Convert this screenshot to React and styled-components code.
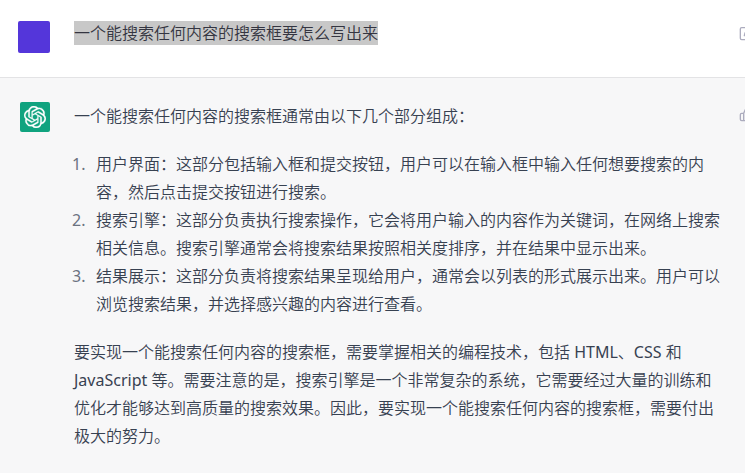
import React from "react";
import styled, { createGlobalStyle } from "styled-components";
import { FiEdit, FiThumbsUp } from "react-icons/fi";
import { SiOpenai } from "react-icons/si";

const GlobalStyle = createGlobalStyle`
	* {
		box-sizing: border-box;
	}
	body {
		margin: 0;
		min-height: 100vh;
		overflow-x: hidden;
		background: #f7f7f8;
		color: #374151;
		font-family: "Noto Sans", "Noto Sans CJK SC DemiLight", "Noto Sans CJK SC", sans-serif;
		font-size: 16px;
		font-weight: 400;
		line-height: 28px;
		text-spacing-trim: space-all;
	}
`;

const Message = styled.article`
	display: flex;
	align-items: flex-start;
	gap: 24px;
	padding: ${(props) => (props.$user ? "21px 0 24px 18px" : "24px 0 24px 18px")};
	background: ${(props) => (props.$user ? "#ffffff" : "#f7f7f8")};
	border-bottom: ${(props) => (props.$user ? "1px solid #e3e3e5" : "none")};
	overflow: hidden;
`;

const AvatarSlot = styled.div`
	display: flex;
	justify-content: flex-end;
	flex: 0 0 32px;
`;

const Avatar = styled.div`
	display: flex;
	align-items: center;
	justify-content: center;
	width: ${(props) => props.$size}px;
	height: ${(props) => props.$size}px;
	border-radius: 2px;
	background: ${(props) => props.$color};
	color: #ffffff;
`;

const Content = styled.div`
	flex: 1;
	min-width: 0;
	font-weight: ${(props) => props.$weight};
`;

const Paragraph = styled.p`
	margin: 0 0 20px;
	&:last-child {
		margin-bottom: 0;
	}
`;

const Selected = styled.mark`
	display: inline-block;
	background: #c8c8c8;
	color: #343541;
	line-height: 24px;
	vertical-align: top;
`;

const List = styled.ol`
	margin: 0 0 20px -2px;
	padding: 0;
	list-style: none;
	counter-reset: item;
`;

const Item = styled.li`
	display: flex;
	counter-increment: item;
	font-weight: 350;
	&::before {
		content: counter(item) ".";
		flex: 0 0 24px;
		color: #6b7280;
		font-weight: 400;
	}
`;

// the buttons run past the right edge of the message
const Actions = styled.div`
	flex: none;
	margin-right: -10px;
	margin-left: -8px;
	padding-top: 4px;
`;

const IconButton = styled.button`
	display: block;
	padding: 0;
	border: 0;
	background: none;
	color: #acacbe;
	svg {
		display: block;
	}
`;

const parts = [
	"用户界面：这部分包括输入框和提交按钮，用户可以在输入框中输入任何想要搜索的内容，然后点击提交按钮进行搜索。",
	"搜索引擎：这部分负责执行搜索操作，它会将用户输入的内容作为关键词，在网络上搜索相关信息。搜索引擎通常会将搜索结果按照相关度排序，并在结果中显示出来。",
	"结果展示：这部分负责将搜索结果呈现给用户，通常会以列表的形式展示出来。用户可以浏览搜索结果，并选择感兴趣的内容进行查看。",
];

const App = () => {
	return (
		<main lang="zh-CN">
			<GlobalStyle />
			<Message $user>
				<AvatarSlot>
					<Avatar $size={32} $color="#5436da" />
				</AvatarSlot>
				<Content $weight={350}>
					<Paragraph>
						<Selected>一个能搜索任何内容的搜索框要怎么写出来</Selected>
					</Paragraph>
				</Content>
				<Actions>
					<IconButton type="button" aria-label="编辑">
						<FiEdit size={16} />
					</IconButton>
				</Actions>
			</Message>
			<Message>
				<AvatarSlot>
					<Avatar $size={30} $color="#10a37f">
						<SiOpenai size={22} stroke="currentColor" strokeWidth={0.3} />
					</Avatar>
				</AvatarSlot>
				<Content $weight={400}>
					<Paragraph>一个能搜索任何内容的搜索框通常由以下几个部分组成：</Paragraph>
					<List>
						{parts.map((part) => (
							<Item key={part}>
								<span>{part}</span>
							</Item>
						))}
					</List>
					<Paragraph>
						要实现一个能搜索任何内容的搜索框，需要掌握相关的编程技术，包括 HTML、CSS 和
						JavaScript 等。需要注意的是，搜索引擎是一个非常复杂的系统，它需要经过大量的训练和优化才能够达到高质量的搜索效果。因此，要实现一个能搜索任何内容的搜索框，需要付出极大的努力。
					</Paragraph>
				</Content>
				<Actions>
					<IconButton type="button" aria-label="赞">
						<FiThumbsUp size={16} />
					</IconButton>
				</Actions>
			</Message>
		</main>
	);
};

export default App;
